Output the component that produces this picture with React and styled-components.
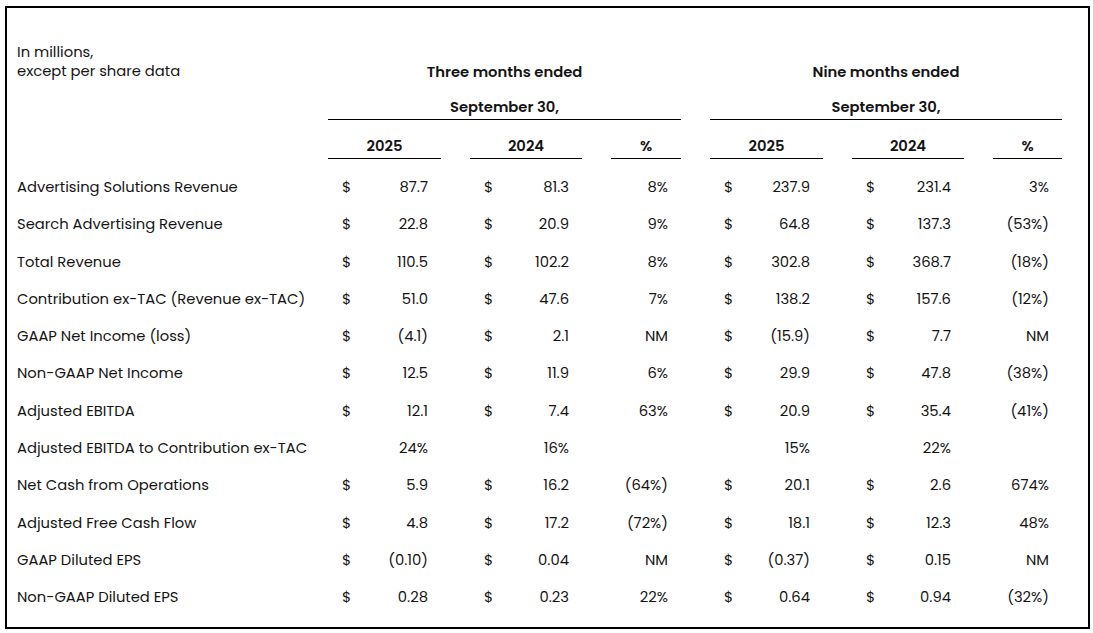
import React from "react";
import styled, { createGlobalStyle } from "styled-components";

const GlobalStyle = createGlobalStyle`
  html, body {
    margin: 0;
    padding: 0;
    background: #ffffff;
  }
  body {
    font-family: Poppins, Inter, "Noto Sans", sans-serif;
    color: #141414;
  }
`;

const COLS = "282px 113px 112px 70px 113px 112px 69px";

const Frame = styled.div`
  box-sizing: border-box;
  margin: 6px 0 0 5px;
  width: 1085px;
  height: 623px;
  border: 2px solid #000;
  padding: 0 27px 0 10px;
  font-size: 14.75px;
  line-height: 19px;
`;

const Row = styled.div`
  display: grid;
  grid-template-columns: ${COLS};
  column-gap: 29px;
  align-items: ${(p) => (p.$bottom ? "end" : "center")};
  height: ${(p) => p.$h};
  padding-top: ${(p) => p.$pt || "0px"};
  box-sizing: border-box;
`;

const Note = styled.div`
  grid-column: 1;
  margin-bottom: 1px;
`;

const Group = styled.div`
  grid-column: ${(p) => p.$span};
  text-align: center;
  font-weight: 600;
  ${(p) => p.$rule && "border-bottom: 1px solid #000; padding-bottom: 2px;"}
`;

const YearHead = styled.div`
  text-align: center;
  font-weight: 600;
  border-bottom: 1px solid #000;
  padding-bottom: 2px;
`;

const Body = styled.div`
  padding-top: 10px;
`;

const Label = styled.div`
  white-space: nowrap;
`;

const Money = styled.div`
  display: flex;
  justify-content: space-between;
  padding: 0 13px 0 14px;
`;

const Pct = styled.div`
  text-align: right;
  padding-right: 13px;
`;

const rows = [
  ["Advertising Solutions Revenue", "87.7", "81.3", "8%", "237.9", "231.4", "3%"],
  ["Search Advertising Revenue", "22.8", "20.9", "9%", "64.8", "137.3", "(53%)"],
  ["Total Revenue", "110.5", "102.2", "8%", "302.8", "368.7", "(18%)"],
  ["Contribution ex-TAC (Revenue ex-TAC)", "51.0", "47.6", "7%", "138.2", "157.6", "(12%)"],
  ["GAAP Net Income (loss)", "(4.1)", "2.1", "NM", "(15.9)", "7.7", "NM"],
  ["Non-GAAP Net Income", "12.5", "11.9", "6%", "29.9", "47.8", "(38%)"],
  ["Adjusted EBITDA", "12.1", "7.4", "63%", "20.9", "35.4", "(41%)"],
  ["Adjusted EBITDA to Contribution ex-TAC", "24%", "16%", "", "15%", "22%", "", true],
  ["Net Cash from Operations", "5.9", "16.2", "(64%)", "20.1", "2.6", "674%"],
  ["Adjusted Free Cash Flow", "4.8", "17.2", "(72%)", "18.1", "12.3", "48%"],
  ["GAAP Diluted EPS", "(0.10)", "0.04", "NM", "(0.37)", "0.15", "NM"],
  ["Non-GAAP Diluted EPS", "0.28", "0.23", "22%", "0.64", "0.94", "(32%)"],
];

const Amount = ({ value, plain }) =>
  plain ? (
    <Pct>{value}</Pct>
  ) : (
    <Money>
      <span>$</span>
      <span>{value}</span>
    </Money>
  );

const App = () => {
  return (
    <>
      <GlobalStyle />
      <Frame>
        <Row $bottom $h="74px" $pt="34px">
          <Note>
            In millions,
            <br />
            except per share data
          </Note>
          <Group $span="2 / 5">Three months ended</Group>
          <Group $span="5 / 8">Nine months ended</Group>
        </Row>
        <Row $bottom $h="38px">
          <Group $span="2 / 5" $rule>
            September 30,
          </Group>
          <Group $span="5 / 8" $rule>
            September 30,
          </Group>
        </Row>
        <Row $bottom $h="39px">
          <div />
          <YearHead>2025</YearHead>
          <YearHead>2024</YearHead>
          <YearHead>%</YearHead>
          <YearHead>2025</YearHead>
          <YearHead>2024</YearHead>
          <YearHead>%</YearHead>
        </Row>
        <Body>
          {rows.map((r) => (
            <Row key={r[0]} $h="37.27px">
              <Label>{r[0]}</Label>
              <Amount value={r[1]} plain={r[7]} />
              <Amount value={r[2]} plain={r[7]} />
              <Pct>{r[3]}</Pct>
              <Amount value={r[4]} plain={r[7]} />
              <Amount value={r[5]} plain={r[7]} />
              <Pct>{r[6]}</Pct>
            </Row>
          ))}
        </Body>
      </Frame>
    </>
  );
};

export default App;
